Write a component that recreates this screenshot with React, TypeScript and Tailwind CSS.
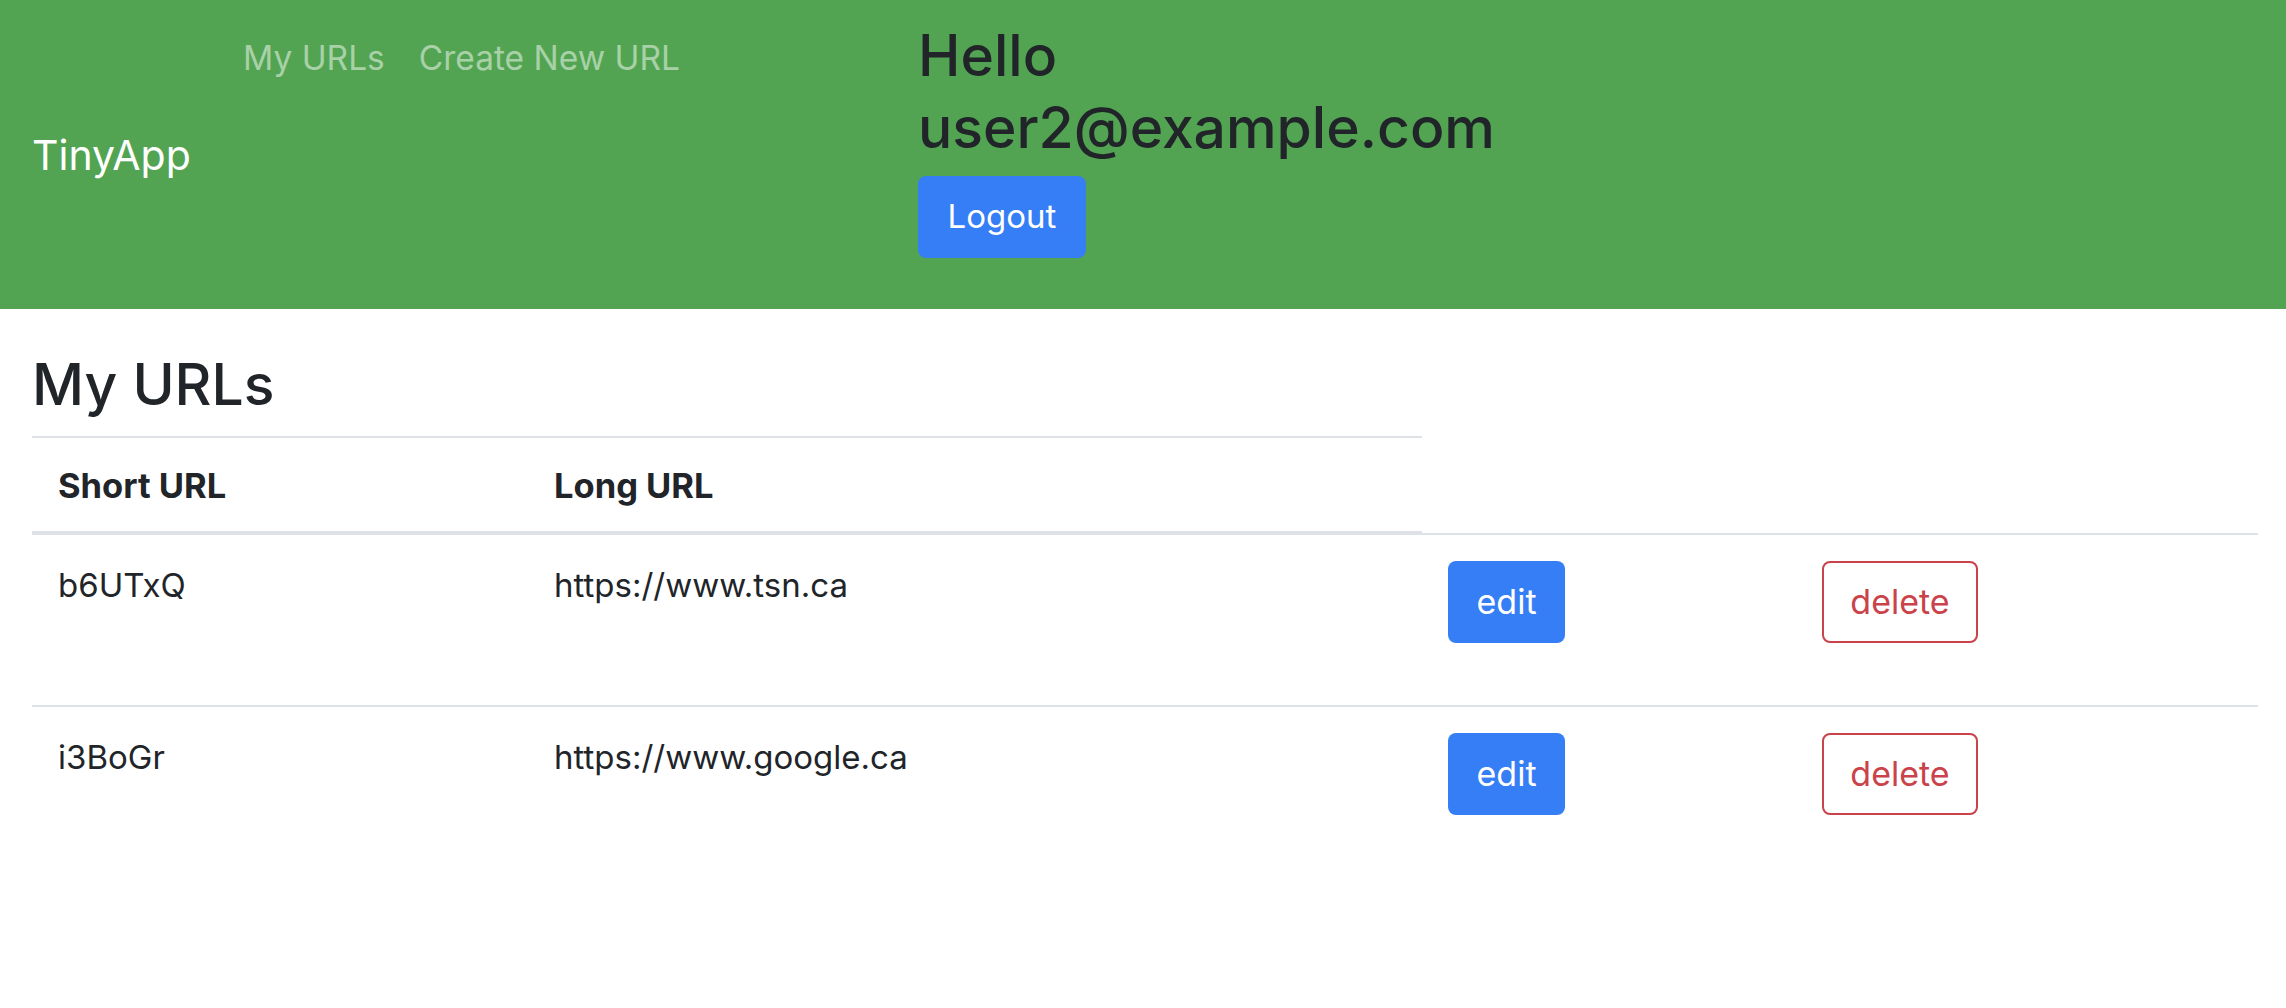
import React from "react";

const rows = [
  { short: "b6UTxQ", long: "https://www.tsn.ca" },
  { short: "i3BoGr", long: "https://www.google.ca" },
];

export default function App() {
  return (
    <div className="min-h-[1008px] w-full bg-white text-[#212529] font-['Inter','Liberation_Sans',sans-serif]">
      <header className="flex h-[309px] items-center bg-[#52a452] pl-[32px]">
        <div className="w-[211px] text-[41px] leading-[60px] text-white">TinyApp</div>
        <nav className="mt-[33px] flex w-[675px] gap-[34px] self-start text-[33.5px] leading-[50px] text-[#a8d1a8]">
          <a>My URLs</a>
          <a>Create New URL</a>
        </nav>
        <div className="flex w-[620px] flex-col items-start self-start pt-[20px]">
          <h2 className="text-[57px] font-medium leading-[72px] text-[#212529]">Hello user2@example.com</h2>
          <button className="mt-[12px] flex h-[82px] w-[168px] items-center justify-center rounded-[8px] bg-[#357ef6] text-[33px] text-white">
            Logout
          </button>
        </div>
      </header>
      <main className="pl-[32px] pt-[40px]">
        <h1 className="mb-[15px] text-[57px] font-medium leading-[72px]">My URLs</h1>
        <table className="w-[2226px] table-fixed border-separate border-spacing-0 text-[33px] leading-[50px]">
          <colgroup>
            <col className="w-[496px]" />
            <col className="w-[894px]" />
            <col className="w-[374px]" />
            <col className="w-[462px]" />
          </colgroup>
          <thead>
            <tr>
              <th className="border-b-4 border-t-2 border-[#dee2e6] px-[26px] pb-[20px] pt-[23px] text-left text-[34.5px] font-bold">Short URL</th>
              <th className="border-b-4 border-t-2 border-[#dee2e6] px-[26px] pb-[20px] pt-[23px] text-left text-[34.5px] font-bold">Long URL</th>
              <th className="border-b-2 border-[#dee2e6]"></th>
              <th className="border-b-2 border-[#dee2e6]"></th>
            </tr>
          </thead>
          <tbody>
            {rows.map((r, i) => (
              <tr key={r.short} className="h-[170px]">
                <td className={`${i > 0 ? "border-t-2 border-[#dee2e6]" : ""} px-[26px] pt-[25px] align-top`}>{r.short}</td>
                <td className={`${i > 0 ? "border-t-2 border-[#dee2e6]" : ""} px-[26px] pt-[25px] align-top`}>{r.long}</td>
                <td className={`${i > 0 ? "border-t-2 border-[#dee2e6]" : ""} px-[26px] pt-[26px] align-top`}>
                  <button className="flex h-[82px] w-[117px] items-center justify-center rounded-[8px] bg-[#357ef6] text-[34px] text-white">
                    edit
                  </button>
                </td>
                <td className={`${i > 0 ? "border-t-2 border-[#dee2e6]" : ""} px-[26px] pt-[26px] align-top`}>
                  <button className="flex h-[82px] w-[156px] items-center justify-center rounded-[8px] border-2 border-[#ca424a] bg-white text-[34px] text-[#ca424a]">
                    delete
                  </button>
                </td>
              </tr>
            ))}
          </tbody>
        </table>
      </main>
    </div>
  );
}
